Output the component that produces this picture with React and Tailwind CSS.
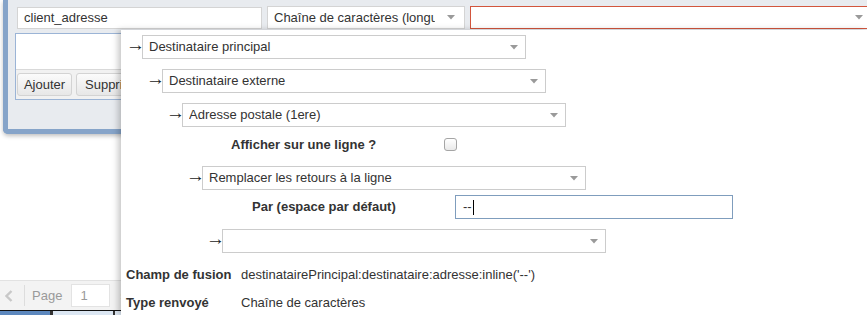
import React from "react";

function Caret() {
  return (
    <svg width="8" height="5" viewBox="0 0 8 5" className="shrink-0">
      <polygon points="0,0 8,0 4,4.5" fill="#9a9a9a" />
    </svg>
  );
}

function Select({ text, className = "", textClass = "pr-[10px]" }) {
  return (
    <div className={`flex items-center bg-white pl-[6px] pr-[7px] ${className}`}>
      <span className={`min-w-0 flex-1 overflow-hidden whitespace-nowrap text-[13px] text-[#333] ${textClass}`}>
        {text}
      </span>
      <Caret />
    </div>
  );
}

function ArrowRow({ text, className = "" }) {
  return (
    <div className={`flex items-center ${className}`}>
      <span className="w-4 shrink-0 -translate-y-[3px] text-[19px] leading-none text-[#222]">→</span>
      <Select text={text} className="h-6 w-[384px] border border-[#cccccc]" />
    </div>
  );
}

export default function App() {
  return (
    <div className="relative flex h-[315px] w-[867px] flex-col overflow-hidden bg-white font-['Liberation_Sans',Arial,sans-serif]">
      {/* background window */}
      <div className="ml-[3px] h-[134px] shrink-0 rounded-bl-[5px] border-b-[5px] border-l-[5px] border-[#86a4c9] bg-[#e8ebef] pl-[7px] pt-[6px] shadow-[0_2px_4px_rgba(0,0,0,0.25)]">
        <div className="ml-[2px] flex items-end gap-[5px]">
          <div className="flex h-[22px] w-[245px] shrink-0 items-center border border-[#d4d4d4] bg-white pl-[6px] text-[13px] text-[#333]">
            client_adresse
          </div>
          <Select
            text="Chaîne de caractères (longueur variable)"
            textClass="mr-[12px]"
            className="h-[23px] w-[198px] shrink-0 border border-[#d4d4d4] pr-[9px]"
          />
          <Select text="" className="h-[23px] w-[401px] shrink-0 border border-[#d2553d]" />
        </div>
        <div className="mt-[4px] flex h-[67px] flex-col border border-[#9bb4d6] bg-white">
          <div className="flex-1" />
          <div className="flex h-[30px] items-center gap-[4px] border-t border-[#d9d9d9] bg-[#f1f1f1] pl-[1px]">
            <div className="flex h-[23px] w-[55px] items-center justify-center rounded-[3px] border border-[#d3d3d3] bg-gradient-to-b from-[#fbfbfb] to-[#e7e7e7] text-[13px] text-[#333]">
              Ajouter
            </div>
            <div className="flex h-[23px] w-[80px] items-center rounded-[3px] border border-[#d3d3d3] bg-gradient-to-b from-[#fbfbfb] to-[#e7e7e7] pl-[8px] text-[13px] text-[#333]">
              Supprimer
            </div>
          </div>
        </div>
      </div>

      <div className="flex-1" />

      {/* pagination bar */}
      <div className="flex h-[30px] shrink-0 items-center border-t border-[#e2e2e2] bg-[#f3f3f3] text-[13px] text-[#9a9a9a]">
        <svg width="8" height="12" viewBox="0 0 8 12" className="ml-[5px]">
          <polyline points="6.5,1 1.5,6 6.5,11" fill="none" stroke="#c8c8c8" strokeWidth="2.4" />
        </svg>
        <div className="ml-[11px] h-[21px] w-px bg-[#dddddd]" />
        <span className="ml-[7px]">Page</span>
        <div className="ml-[9px] flex h-[23px] w-[39px] items-center border border-[#e3e3e3] bg-white pl-[8px]">1</div>
        <span className="ml-[10px]">sur 1</span>
      </div>

      {/* taskbar */}
      <div className="flex h-[5px] shrink-0 border-t border-[#111]">
        <div className="w-[50px] bg-[#5d88be]" />
        <div className="w-[3px] bg-[#333]" />
        <div className="w-[60px] bg-[#dbe6f2]" />
        <div className="w-[2px] bg-[#333]" />
        <div className="w-[53px] bg-[#dde7f2]" />
        <div className="w-[5px] bg-[#556]" />
        <div className="w-[65px] bg-[#9fc0e6]" />
        <div className="w-[2px] bg-[#333]" />
        <div className="w-[48px] bg-[#dde7f2]" />
        <div className="w-[5px] bg-[#556]" />
        <div className="w-[194px] bg-gradient-to-r from-[#4f7db8] to-[#5a87c0]" />
        <div className="w-[58px] bg-[#dde7f2]" />
        <div className="w-[2px] bg-[#333]" />
        <div className="w-[58px] bg-[#dde7f2]" />
        <div className="w-[2px] bg-[#333]" />
        <div className="flex-1 bg-gradient-to-r from-[#4f7db8] via-[#9cc0e6] to-[#3e6aa6]" />
      </div>

      {/* overlay dropdown */}
      <div className="absolute bottom-0 left-[121px] right-0 top-[30px] bg-white pl-[5px] pt-[5px] shadow-[-3px_0_6px_rgba(0,0,0,0.22)]">
        <ArrowRow text="Destinataire principal" />
        <ArrowRow text="Destinataire externe" className="ml-5 mt-[10px]" />
        <ArrowRow text="Adresse postale (1ere)" className="ml-10 mt-[10px]" />
        <div className="flex h-[35px] items-center">
          <span className="ml-[105px] w-[213px] shrink-0 text-[13px] font-bold text-[#333]">
            Afficher sur une ligne ?
          </span>
          <div className="h-[13px] w-[13px] rounded-[3px] border border-[#a5a5a5] bg-gradient-to-b from-white to-[#e9e9e9]" />
        </div>
        <ArrowRow text="Remplacer les retours à la ligne" className="ml-[60px] mt-[4px]" />
        <div className="mt-[5px] flex h-6 items-center">
          <span className="ml-[126px] w-[203px] shrink-0 text-[13px] font-bold text-[#333]">
            Par (espace par défaut)
          </span>
          <div className="flex h-6 w-[278px] items-center border border-[#7f9dbd] bg-white pl-[7px] text-[13px] text-[#333]">
            <span>--</span>
            <span className="ml-[1px] h-[15px] w-px bg-black" />
          </div>
        </div>
        <ArrowRow text="" className="ml-20 mt-[10px]" />
        <div className="mt-[14px] flex h-4 items-center text-[13px] text-[#333]">
          <span className="w-[115px] shrink-0 font-bold">Champ de fusion</span>
          <span>destinatairePrincipal:destinataire:adresse:inline('--')</span>
        </div>
        <div className="mt-[12px] flex h-4 items-center text-[13px] text-[#333]">
          <span className="w-[115px] shrink-0 font-bold">Type renvoyé</span>
          <span>Chaîne de caractères</span>
        </div>
      </div>
    </div>
  );
}
